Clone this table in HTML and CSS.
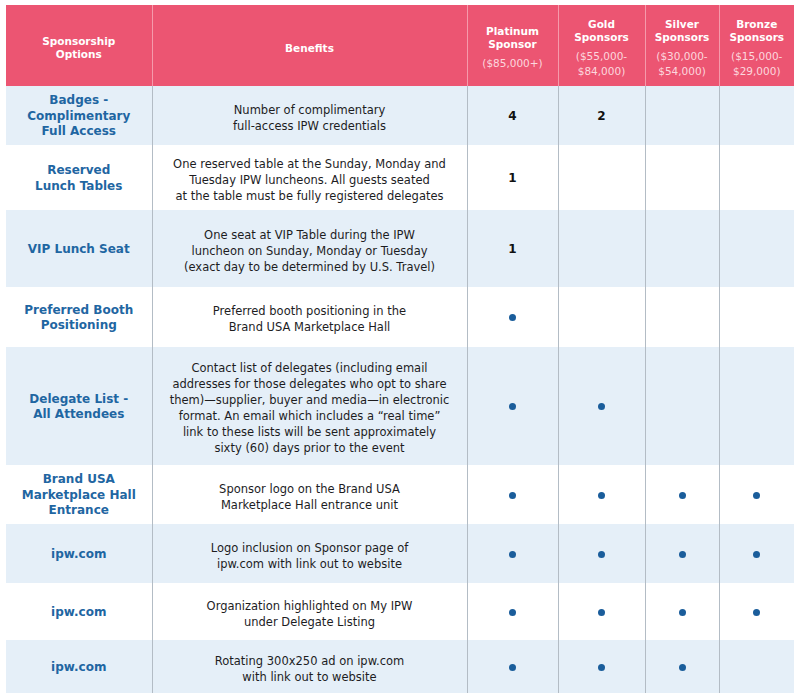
FILE: index.html
```html
<!DOCTYPE html>
<html lang="en">
<head>
<meta charset="utf-8">
<title>Sponsorship Options</title>
<link rel="stylesheet" href="styles.css">
</head>
<body>
<table class="grid">
  <colgroup>
    <col class="c-opt"><col class="c-ben"><col class="c-plat"><col class="c-gold"><col class="c-silv"><col class="c-bronze">
  </colgroup>
  <thead>
    <tr class="head">
      <th><span class="ttl">Sponsorship<br>Options</span></th>
      <th><span class="ttl">Benefits</span></th>
      <th><span class="ttl">Platinum<br>Sponsor</span><span class="price">($85,000+)</span></th>
      <th><span class="ttl">Gold<br>Sponsors</span><span class="price">($55,000-<br>$84,000)</span></th>
      <th><span class="ttl">Silver<br>Sponsors</span><span class="price">($30,000-<br>$54,000)</span></th>
      <th><span class="ttl">Bronze<br>Sponsors</span><span class="price">($15,000-<br>$29,000)</span></th>
    </tr>
  </thead>
  <tbody>
    <tr class="alt h59">
      <td class="opt">Badges -<br>Complimentary<br>Full Access</td>
      <td class="ben">Number of complimentary<br>full-access IPW credentials</td>
      <td class="num">4</td><td class="num">2</td><td></td><td></td>
    </tr>
    <tr class="h65">
      <td class="opt">Reserved<br>Lunch Tables</td>
      <td class="ben">One reserved table at the Sunday, Monday and<br>Tuesday IPW luncheons. All guests seated<br>at the table must be fully registered delegates</td>
      <td class="num">1</td><td></td><td></td><td></td>
    </tr>
    <tr class="alt h77">
      <td class="opt">VIP Lunch Seat</td>
      <td class="ben">One seat at VIP Table during the IPW<br>luncheon on Sunday, Monday or Tuesday<br>(exact day to be determined by U.S. Travel)</td>
      <td class="num">1</td><td></td><td></td><td></td>
    </tr>
    <tr class="h60">
      <td class="opt">Preferred Booth<br>Positioning</td>
      <td class="ben">Preferred booth positioning in the<br>Brand USA Marketplace Hall</td>
      <td class="num"><span class="dot"></span></td><td></td><td></td><td></td>
    </tr>
    <tr class="alt h118">
      <td class="opt">Delegate List -<br>All Attendees</td>
      <td class="ben">Contact list of delegates (including email<br>addresses for those delegates who opt to share<br>them)—supplier, buyer and media—in electronic<br>format. An email which includes a “real time”<br>link to these lists will be sent approximately<br>sixty (60) days prior to the event</td>
      <td class="num"><span class="dot"></span></td><td class="num"><span class="dot"></span></td><td></td><td></td>
    </tr>
    <tr class="h59">
      <td class="opt">Brand USA<br>Marketplace Hall<br>Entrance</td>
      <td class="ben">Sponsor logo on the Brand USA<br>Marketplace Hall entrance unit</td>
      <td class="num"><span class="dot"></span></td><td class="num"><span class="dot"></span></td><td class="num"><span class="dot"></span></td><td class="num"><span class="dot"></span></td>
    </tr>
    <tr class="alt h59">
      <td class="opt">ipw.com</td>
      <td class="ben">Logo inclusion on Sponsor page of<br>ipw.com with link out to website</td>
      <td class="num"><span class="dot"></span></td><td class="num"><span class="dot"></span></td><td class="num"><span class="dot"></span></td><td class="num"><span class="dot"></span></td>
    </tr>
    <tr class="h57">
      <td class="opt">ipw.com</td>
      <td class="ben">Organization highlighted on My IPW<br>under Delegate Listing</td>
      <td class="num"><span class="dot"></span></td><td class="num"><span class="dot"></span></td><td class="num"><span class="dot"></span></td><td class="num"><span class="dot"></span></td>
    </tr>
    <tr class="alt h53">
      <td class="opt">ipw.com</td>
      <td class="ben">Rotating 300x250 ad on ipw.com<br>with link out to website</td>
      <td class="num"><span class="dot"></span></td><td class="num"><span class="dot"></span></td><td class="num"><span class="dot"></span></td><td></td>
    </tr>
  </tbody>
</table>
</body>
</html>
```
FILE: styles.css
```css
html, body {
  background: #ffffff;
}
body {
  margin: 5px 6px;
  font-family: "DejaVu Sans", "Open Sans", sans-serif;
  color: #1d1d1f;
}
.grid {
  width: 788px;
  border-collapse: collapse;
  table-layout: fixed;
}
.c-opt { width: 146px; }
.c-ben { width: 315px; }
.c-plat { width: 91px; }
.c-gold { width: 87px; }
.c-silv { width: 74px; }
.c-bronze { width: 75px; }

.head {
  height: 81px;
  background: #ec5572;
}
.head th {
  padding: 5px 0 0;
  vertical-align: middle;
  text-align: center;
  color: #ffffff;
  border-left: 1px solid #f59aab;
}
.head th:first-child {
  border-left: none;
}
.ttl {
  display: block;
  font-weight: bold;
  font-size: 10.5px;
  line-height: 13px;
}
.price {
  display: block;
  margin-top: 5px;
  font-weight: normal;
  font-size: 10.5px;
  line-height: 15px;
  color: #fcd7de;
}

tbody tr { background: #ffffff; }
tbody tr.alt { background: #e5eff8; }
.h53 { height: 53px; }
.h57 { height: 57px; }
.h59 { height: 59px; }
.h60 { height: 60px; }
.h65 { height: 65px; }
.h77 { height: 77px; }
.h118 { height: 118px; }

tbody td {
  padding: 0;
  text-align: center;
  vertical-align: middle;
  border-left: 1px solid #b3bcc5;
  white-space: nowrap;
}
tbody td:first-child {
  border-left: none;
}
.opt {
  font-weight: bold;
  font-size: 12px;
  line-height: 15.5px;
  color: #1f66a2;
  padding-top: 2px;
}
.ben {
  font-size: 11.5px;
  line-height: 16px;
  color: #1d1d1f;
  padding-top: 4px;
}
.num {
  font-weight: bold;
  font-size: 12px;
  color: #111111;
}
.dot {
  display: inline-block;
  width: 7px;
  height: 7px;
  border-radius: 50%;
  background: #1a5d9b;
  vertical-align: middle;
}
```
